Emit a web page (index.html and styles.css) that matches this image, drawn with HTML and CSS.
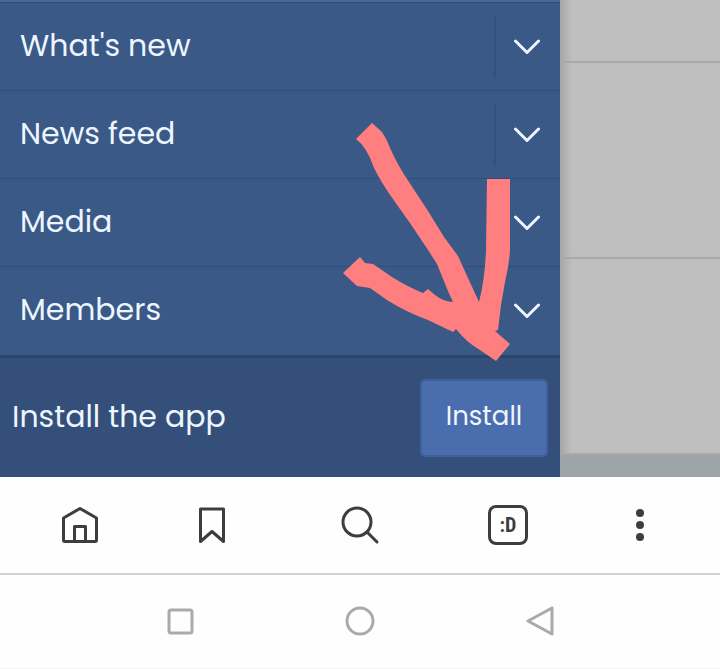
FILE: index.html
```html
<!DOCTYPE html>
<html lang="en">
<head>
  <meta charset="UTF-8">
  <meta name="viewport" content="width=device-width, initial-scale=1">
  <title>Install the app</title>
  <link rel="stylesheet" href="styles.css">
</head>
<body>
  <div class="content">
    <aside class="drawer">
      <ul class="menu">
        <li class="menu-item">
          <a href="#">What's new</a>
          <button class="toggle" aria-label="Toggle What's new">
            <svg width="28" height="18" viewBox="0 0 28 18"><path d="M1.500 3L13 14.500L24.500 3"/></svg>
          </button>
        </li>
        <li class="menu-item">
          <a href="#">News feed</a>
          <button class="toggle" aria-label="Toggle News feed">
            <svg width="28" height="18" viewBox="0 0 28 18"><path d="M1.500 3L13 14.500L24.500 3"/></svg>
          </button>
        </li>
        <li class="menu-item">
          <a href="#">Media</a>
          <button class="toggle" aria-label="Toggle Media">
            <svg width="28" height="18" viewBox="0 0 28 18"><path d="M1.500 3L13 14.500L24.500 3"/></svg>
          </button>
        </li>
        <li class="menu-item">
          <a href="#">Members</a>
          <button class="toggle" aria-label="Toggle Members">
            <svg width="28" height="18" viewBox="0 0 28 18"><path d="M1.500 3L13 14.500L24.500 3"/></svg>
          </button>
        </li>
      </ul>
      <div class="install">
        <span>Install the app</span>
        <button class="install-button">Install</button>
      </div>

      <!-- hand-drawn arrow pointing at the install button -->
      <svg class="arrow" width="167" height="182" viewBox="343 179 167 182" aria-hidden="true">
        <path d="M356 139L372 123L381 131Q386 137 390 148Q398 166 409 182L428 211L444 237L458 256L468 278L479 302Q485 279 486 250L487 179H510V250Q509 266 505 282L501 305L498 330L495 331L510 344L496 361L480 350Q466 342 456 329L453 332L428 320Q406 312 387 300L370 288L357 286L343 273L360 257L365 263L373 264L392 277Q408 287 423 293L428 289L435 295Q444 302 453 302L448 291L437 264L428 250L410 223L395 202Q382 184 374 168Q367 147 356 139Z"/>
      </svg>
    </aside>

    <main class="page">
      <div class="page-row first"></div>
      <div class="page-row"></div>
      <div class="page-row"></div>
    </main>
  </div>

  <nav class="browser-bar">
    <button aria-label="Home">
      <svg width="40" height="40" viewBox="0 0 40 40"><path d="M3.500 13L20 3.500L36.500 13V35Q36.500 36.500 35 36.500H5Q3.500 36.500 3.500 35ZM14.500 36V21.500H25.500V36"/></svg>
    </button>
    <button aria-label="Bookmarks">
      <svg width="40" height="40" viewBox="0 0 40 40"><path d="M8.500 4H31.500V36.500L20 26.500L8.500 36.500Z"/></svg>
    </button>
    <button aria-label="Search">
      <svg width="40" height="40" viewBox="0 0 40 40"><circle cx="17" cy="17" r="14"/><path d="M27 27L37 37"/></svg>
    </button>
    <button class="tabs" aria-label="Tabs">:D</button>
    <button aria-label="More">
      <svg class="dots" width="40" height="40" viewBox="0 0 40 40"><circle cx="20" cy="8" r="4"/><circle cx="20" cy="20" r="4"/><circle cx="20" cy="32" r="4"/></svg>
    </button>
  </nav>

  <nav class="system-bar">
    <button aria-label="Recent apps">
      <svg width="32" height="32" viewBox="0 0 32 32"><rect x="5" y="4" width="23" height="23" rx="2"/></svg>
    </button>
    <button aria-label="Home screen">
      <svg width="32" height="32" viewBox="0 0 32 32"><circle cx="16" cy="15" r="13"/></svg>
    </button>
    <button aria-label="Back">
      <svg width="32" height="32" viewBox="0 0 32 32"><path d="M4 15L28 2V28Z"/></svg>
    </button>
  </nav>
</body>
</html>
```

FILE: styles.css
```css
* {
  box-sizing: border-box;
}
body {
  margin: 0;
  background: #fefefe;
  font-family: Poppins, Inter, "Open Sans", sans-serif;
}
button {
  padding: 0;
  border: 0;
  background: none;
  font-family: inherit;
}
svg {
  display: block;
  fill: none;
  stroke-linecap: round;
  stroke-linejoin: round;
}

.content {
  display: flex;
}
.drawer {
  position: relative;
  flex: 7;
  border-top: 2px solid #496a97;
  background: #3a5987;
  color: #edf6ff;
  font-size: 30px;
  line-height: 40px;
}
.menu {
  margin: 0;
  padding: 0;
  list-style: none;
  border-top: 1px solid #2c4a78;
}
.menu-item {
  display: flex;
  align-items: center;
  height: 88px;
  border-bottom: 1px solid #304e7b;
}
.menu-item:last-child {
  border-bottom: 0;
}
.menu-item a {
  flex: 1;
  padding: 0 0 2px 20px;
  color: inherit;
  text-decoration: none;
}
.toggle {
  display: flex;
  align-items: center;
  justify-content: center;
  width: 66px;
  height: 62px;
  border-left: 2px solid #345280;
}
.toggle svg {
  stroke: #edf6ff;
  stroke-width: 3;
}
.install {
  display: flex;
  align-items: center;
  justify-content: space-between;
  height: 122px;
  padding: 0 12px;
  border-top: 3px solid #294570;
  background: #344f79;
}
.install span {
  padding-bottom: 2px;
}
.install-button {
  width: 128px;
  height: 78px;
  padding-bottom: 2px;
  border: 2px solid #3e619c;
  border-radius: 5px;
  background: #4a6dad;
  color: #edf6ff;
  font-size: 26px;
}
.arrow {
  position: absolute;
  right: 50px;
  bottom: 116px;
  overflow: visible;
  fill: #ff7f80;
}

.page {
  flex: 2;
  background: linear-gradient(to right, #a5a5aa, #bfbfbf 12px);
  border-bottom: 22px solid #9ea5a9;
}
.page-row {
  height: 196px;
  border-bottom: 2px solid #aaa;
}
.page-row.first {
  height: 63px;
}

.browser-bar {
  display: grid;
  grid-template-columns: 20fr 13fr 24fr 13fr 20fr;
  align-items: center;
  justify-items: center;
  height: 98px;
  border-bottom: 2px solid #d2d2d2;
}
.browser-bar svg {
  stroke: #3d3d3f;
  stroke-width: 3;
}
.browser-bar .dots {
  fill: #3d3d3f;
  stroke: none;
}
.tabs {
  width: 40px;
  height: 40px;
  border: 3px solid #3d3d3f;
  border-radius: 8px;
  color: #3d3d3f;
  font-family: "Roboto Condensed", Roboto, sans-serif;
  font-size: 20px;
  font-weight: bold;
}
.system-bar {
  display: grid;
  grid-template-columns: repeat(3, 1fr);
  align-items: center;
  justify-items: center;
  height: 94px;
  padding: 0 90px;
  border-bottom: 1px solid #f4f4f4;
}
.system-bar svg {
  stroke: #aaa;
  stroke-width: 3;
}
```
